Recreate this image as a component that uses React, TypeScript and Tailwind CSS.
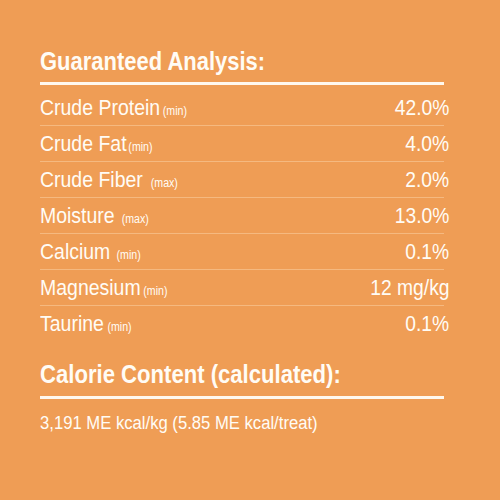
const rows = [
  { name: "Crude Protein", note: "(min)", gap: "ml-[3px]", value: "42.0%" },
  { name: "Crude Fat", note: "(min)", gap: "ml-[2px]", value: "4.0%" },
  { name: "Crude Fiber", note: "(max)", gap: "ml-[9px]", value: "2.0%" },
  { name: "Moisture", note: "(max)", gap: "ml-[8px]", value: "13.0%" },
  { name: "Calcium", note: "(min)", gap: "ml-[7px]", value: "0.1%" },
  { name: "Magnesium", note: "(min)", gap: "ml-[3px]", value: "12 mg/kg" },
  { name: "Taurine", note: "(min)", gap: "ml-[4px]", value: "0.1%" },
];

// condensed look: Liberation Sans squeezed horizontally
const sans = "font-['Liberation_Sans',Arial,sans-serif]";

export default function App() {
  return (
    <div className="w-[500px] h-[500px] bg-[#ef9d55] text-[#fffcf5] pt-[49px] pl-[40px]">
      <div className="w-[404px]">
        <h1 className={`${sans} font-bold text-[26px] leading-[25px] h-[25px] whitespace-nowrap origin-left scale-x-[0.845]`}>
          Guaranteed Analysis:
        </h1>
        <div className="mt-[8px] h-[3px] bg-[#fff8ee]" />

        <div>
          {rows.map((r, i) => (
            <div
              key={r.name}
              className={
                i === 0
                  ? "h-[40px] pt-[6px] flex items-center justify-between"
                  : "h-[36px] border-t border-[#f5b980] flex items-center justify-between"
              }
            >
              <div className={`${sans} flex items-baseline leading-none whitespace-nowrap origin-left scale-x-[0.885]`}>
                <span className="text-[22px]">{r.name}</span>
                <span className={`text-[12px] ${r.gap}`}>{r.note}</span>
              </div>
              <span className={`${sans} text-[22px] leading-none whitespace-nowrap origin-right scale-x-[0.875] -mr-[5px]`}>
                {r.value}
              </span>
            </div>
          ))}
        </div>

        <h2 className={`${sans} font-bold text-[26px] leading-[25px] h-[25px] whitespace-nowrap origin-left scale-x-[0.85] mt-[21px]`}>
          Calorie Content (calculated):
        </h2>
        <div className="mt-[9px] h-[3px] bg-[#fff8ee]" />
        <p className={`${sans} text-[18px] leading-none mt-[15px] whitespace-nowrap origin-left scale-x-[0.925]`}>
          3,191 ME kcal/kg (5.85 ME kcal/treat)
        </p>
      </div>
    </div>
  );
}
